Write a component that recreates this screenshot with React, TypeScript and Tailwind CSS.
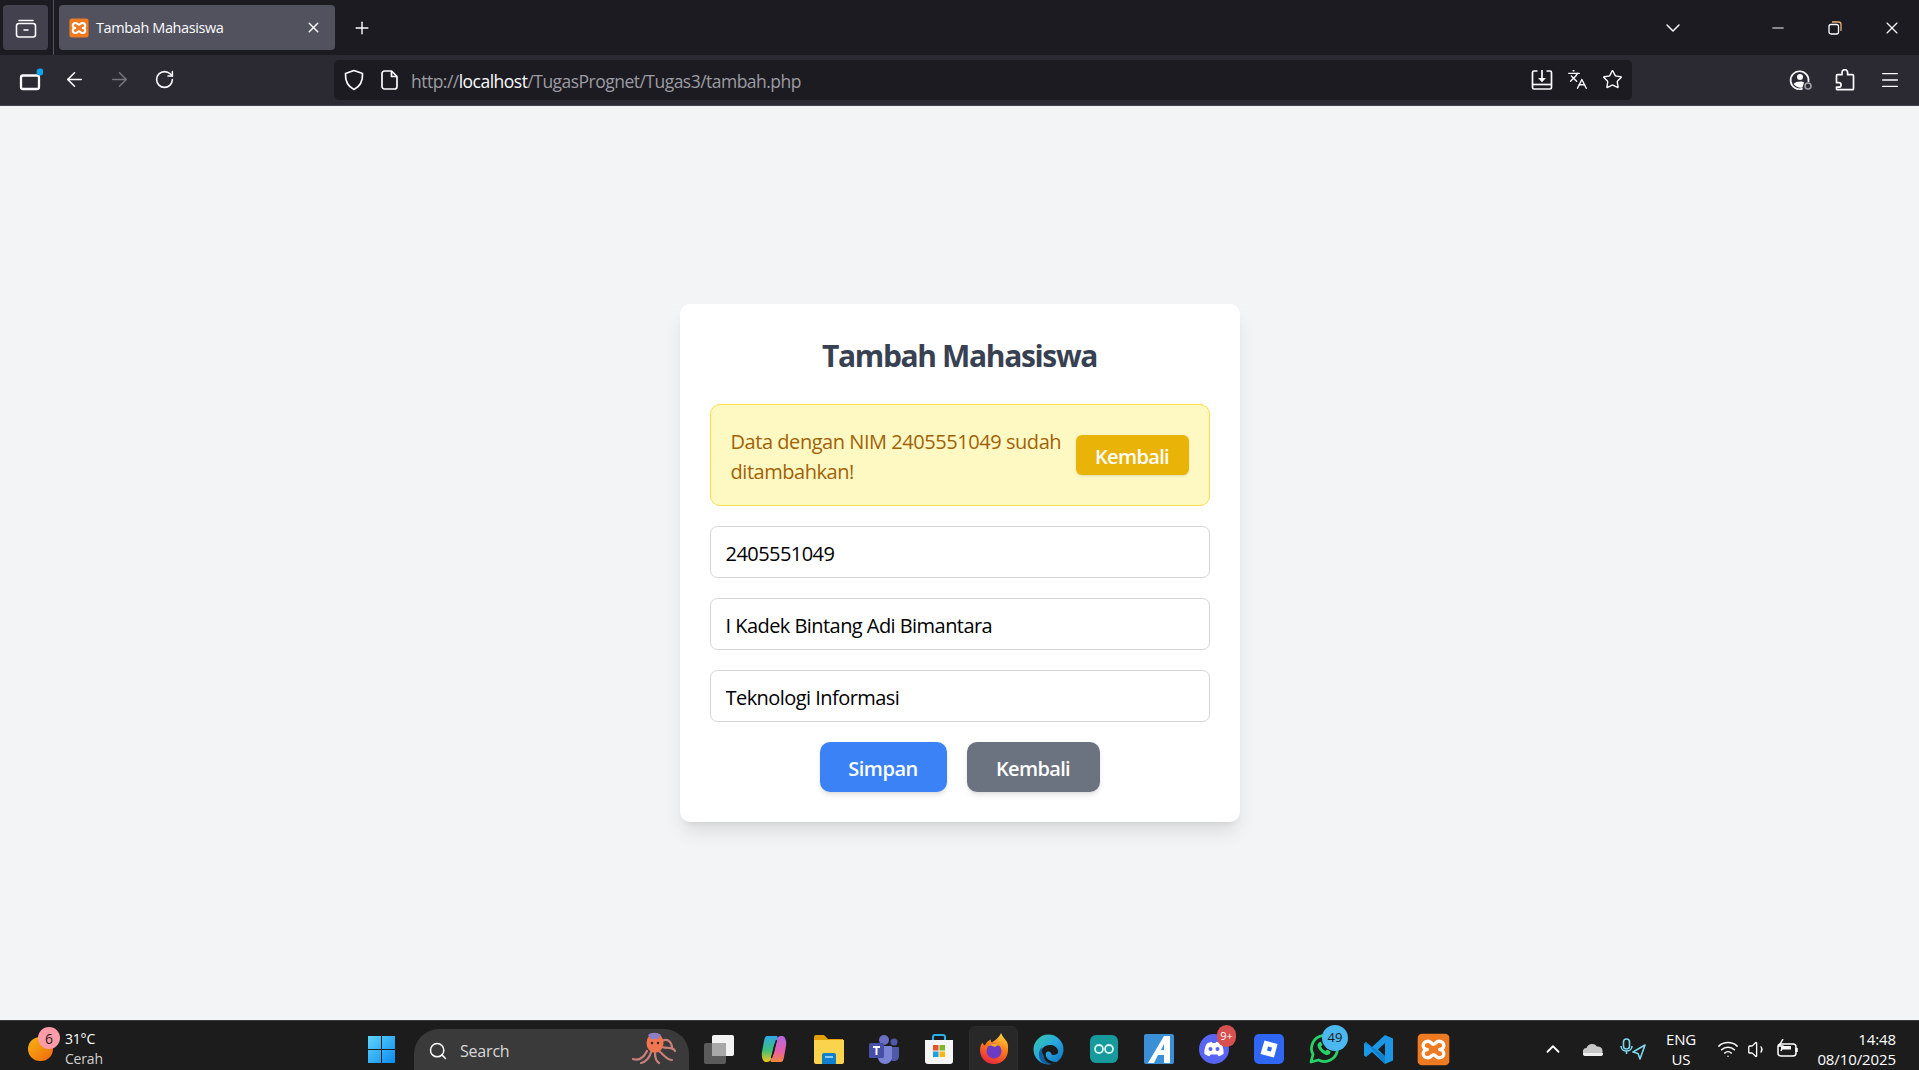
import { ArrowLeft, ArrowRight, ChevronDown, ChevronUp, Languages, Menu, Minus, Plus, RotateCw, Search, Star, Volume1, Wifi, X } from "lucide-react";

function Xampp({ size = 20, rx = 3 }: { size?: number; rx?: number }) {
  return (
    <svg width={size} height={size} viewBox="0 0 24 24">
      <rect x="0.500" y="0.500" width="23" height="23" rx={rx} fill="#ee7a22" />
      <path d="M8 6c2.200 0 2.600 2.200 4 2.200S13.800 6 16 6c2.200 0 3.500 1.500 3.500 3 0 1.700-1.400 3-3 3 1.600 0 3 1.300 3 3 0 1.500-1.300 3-3.500 3-2.200 0-2.600-2.200-4-2.200S10.200 18 8 18c-2.200 0-3.500-1.500-3.500-3 0-1.700 1.400-3 3-3-1.600 0-3-1.300-3-3 0-1.500 1.300-3 3.500-3Z" fill="none" stroke="#fff" strokeWidth="2.400" strokeLinejoin="round" />
    </svg>
  );
}

function TabsIcon() {
  return (
    <svg width="22" height="22" viewBox="0 0 22 22" fill="none" stroke="#fbfbfe" strokeWidth="1.600">
      <path d="M4 3.500h14" strokeLinecap="round" />
      <rect x="1.500" y="6.500" width="19" height="13.500" rx="2.500" />
      <path d="M8.500 13h5" />
    </svg>
  );
}

function SidebarIcon() {
  return (
    <svg width="26" height="26" viewBox="0 0 26 26">
      <rect x="4" y="8.500" width="18" height="13.500" rx="2" fill="none" stroke="#fbfbfe" strokeWidth="2.300" />
      <circle cx="23" cy="5" r="3.500" fill="#0ea5f0" />
    </svg>
  );
}

function ShieldIcon() {
  return (
    <svg width="20" height="22" viewBox="0 0 20 22" fill="none" stroke="#fbfbfe" strokeWidth="1.700">
      <path d="M10 1.500 18.500 4.500c.4 7.500-2.500 13-8.500 16-6-3-8.900-8.500-8.500-16Z" strokeLinejoin="round" />
    </svg>
  );
}

function PageIcon() {
  return (
    <svg width="18" height="20" viewBox="0 0 18 20" fill="none" stroke="#fbfbfe" strokeWidth="1.700">
      <path d="M3.500 1h7l5.500 5.500V16.500a2.500 2.500 0 0 1-2.500 2.500h-10A2.500 2.500 0 0 1 1 16.500v-13A2.500 2.500 0 0 1 3.500 1Z" strokeLinejoin="round" />
      <path d="M10.500 1v5.500H16" strokeLinejoin="round" />
    </svg>
  );
}

function DownloadIcon() {
  return (
    <svg width="22" height="22" viewBox="0 0 22 22" fill="none" stroke="#fbfbfe" strokeWidth="1.700">
      <path d="M6.500 2H3a1.500 1.500 0 0 0-1.500 1.500v15A1.500 1.500 0 0 0 3 20h16a1.500 1.500 0 0 0 1.500-1.500v-15A1.500 1.500 0 0 0 19 2h-3.500" />
      <path d="M2 15.500h18" />
      <path d="M11 1v10" />
      <path d="M7 9h8l-4 4.200Z" fill="#fbfbfe" stroke="none" />
    </svg>
  );
}

function ProfileIcon() {
  return (
    <svg width="24" height="24" viewBox="0 0 24 24" fill="none">
      <path d="M19.500 13.500A9 9 0 1 0 13 20.900" stroke="#fbfbfe" strokeWidth="1.700" strokeLinecap="round" />
      <circle cx="11" cy="9" r="3" fill="#fbfbfe" />
      <path d="M4.500 16c3-3 9-3 10.500-1.500L13.500 19.500c-3 .8-6.500-.5-9-3.500Z" fill="#fbfbfe" />
      <circle cx="19" cy="18" r="3" stroke="#a1a1aa" strokeWidth="1.600" />
    </svg>
  );
}

function PuzzleIcon() {
  return (
    <svg width="22" height="22" viewBox="0 0 22 22" fill="none" stroke="#fbfbfe" strokeWidth="1.700" strokeLinejoin="round">
      <path d="M8 6V3.800a2.800 2.800 0 0 1 5.600 0V6h4.900a1 1 0 0 1 1 1v13a1 1 0 0 1-1 1H3.500a1 1 0 0 1-1-1v-1.500h2.300a2 2 0 0 0 0-4.500H2.500V7a1 1 0 0 1 1-1Z" transform="translate(0 -.3)" />
    </svg>
  );
}

function WinLogo() {
  return (
    <svg width="29" height="29" viewBox="0 0 29 29">
      <defs>
        <linearGradient id="win" x1="0" y1="0" x2="1" y2="1">
          <stop offset="0" stopColor="#5fd4fb" />
          <stop offset="1" stopColor="#0b8bef" />
        </linearGradient>
      </defs>
      <path d="M1 1h13v13H1ZM15 1h13v13H15ZM1 15h13v13H1ZM15 15h13v13H15Z" fill="url(#win)" />
    </svg>
  );
}

function Octopus() {
  return (
    <svg width="50" height="34" viewBox="0 0 50 34" fill="none" strokeLinecap="round">
      <path d="M4 28c6 2 11-2 14-8M12 32c5-1 9-6 10-11M26 22c0 4 1 8 4 10M30 20c5 4 8 9 13 9M33 16c6 2 11-1 13 4M33 10c5-3 9 0 10 6" stroke="#c9807d" strokeWidth="2.200" />
      <ellipse cx="26" cy="12" rx="8.500" ry="10" fill="#f0764f" />
      <path d="M19 4c3-3 9-3 13 0l-3 4h-7Z" fill="#8d7fc5" />
      <circle cx="23" cy="12" r="1.200" fill="#402018" />
      <circle cx="29" cy="12" r="1.200" fill="#402018" />
    </svg>
  );
}

function TaskView() {
  return (
    <svg width="32" height="32" viewBox="0 0 32 32">
      <rect x="1" y="10" width="22" height="21" rx="2" fill="#5b5b5b" />
      <rect x="9" y="2" width="22" height="21" rx="2" fill="#f2f2f2" />
      <rect x="9" y="10" width="14" height="13" fill="#a8a8a8" />
    </svg>
  );
}

function Copilot() {
  return (
    <svg width="30" height="30" viewBox="0 0 30 30">
      <defs>
        <linearGradient id="cpa" x1="0" y1="0" x2="0" y2="1">
          <stop offset="0" stopColor="#2fa8e8" />
          <stop offset=".55" stopColor="#3ec07a" />
          <stop offset="1" stopColor="#f5c518" />
        </linearGradient>
        <linearGradient id="cpb" x1="0" y1="0" x2="0" y2="1">
          <stop offset="0" stopColor="#b36be0" />
          <stop offset=".6" stopColor="#e85fa8" />
          <stop offset="1" stopColor="#f28a3c" />
        </linearGradient>
      </defs>
      <path d="M8 2h9c1.500 0 2 1 1.500 2.500L15 11 12 25c-.5 2-2 3-4 3H7c-3 0-5-5-4-10L5 7c.5-3 1.500-5 3-5Z" fill="url(#cpa)" />
      <path d="M22 28h-9c-1.500 0-2-1-1.500-2.500L15 19l3-14c.5-2 2-3 4-3h1c3 0 5 5 4 10l-2 11c-.5 3-1.500 5-3 5Z" fill="url(#cpb)" />
      <path d="M12.500 24 17.500 6" stroke="#1c1c1c" strokeWidth="1.400" />
    </svg>
  );
}

function Explorer() {
  return (
    <svg width="32" height="30" viewBox="0 0 32 30">
      <path d="M1 3a2 2 0 0 1 2-2h8l4 4h15v4H1Z" fill="#e3a008" />
      <path d="M1 6h30v22a2 2 0 0 1-2 2H3a2 2 0 0 1-2-2Z" fill="#fbd34d" />
      <path d="M9 21a2 2 0 0 1 2-2h10a2 2 0 0 1 2 2v9H9Z" fill="#0f7fcf" />
      <path d="M12 23h8" stroke="#bfe3fa" strokeWidth="1.500" />
    </svg>
  );
}

function Teams() {
  return (
    <svg width="32" height="30" viewBox="0 0 32 30">
      <circle cx="16" cy="6" r="5" fill="#6a6fc4" />
      <circle cx="26" cy="8" r="3.500" fill="#5059a8" />
      <path d="M21 13h9a1 1 0 0 1 1 1v8c0 3-2 5-5 5s-5-2-5-5Z" fill="#5059a8" />
      <path d="M10 12h13a1 1 0 0 1 1 1v10c0 4-3 7-7 7s-7-3-7-7Z" fill="#7b83d6" />
      <rect x="1" y="9" width="15" height="15" rx="1.500" fill="#4750a8" />
      <path d="M5 13h7M8.500 13v8" stroke="#fff" strokeWidth="2" />
    </svg>
  );
}

function Store() {
  return (
    <svg width="30" height="32" viewBox="0 0 30 32">
      <path d="M9 7V4a2 2 0 0 1 2-2h8a2 2 0 0 1 2 2v3" fill="none" stroke="#28b0e8" strokeWidth="2" />
      <path d="M1 7h28v21a3 3 0 0 1-3 3H4a3 3 0 0 1-3-3Z" fill="#f5f5f5" />
      <rect x="9" y="12" width="5.500" height="5.500" fill="#e8512d" />
      <rect x="15.500" y="12" width="5.500" height="5.500" fill="#7db52d" />
      <rect x="9" y="18.500" width="5.500" height="5.500" fill="#1fa0e8" />
      <rect x="15.500" y="18.500" width="5.500" height="5.500" fill="#fbb814" />
    </svg>
  );
}

function Firefox() {
  return (
    <svg width="30" height="32" viewBox="0 0 30 32">
      <defs>
        <linearGradient id="ffa" x1=".7" y1="0" x2=".3" y2="1">
          <stop offset="0" stopColor="#ffd43b" />
          <stop offset=".45" stopColor="#ff7a1a" />
          <stop offset="1" stopColor="#e8263f" />
        </linearGradient>
      </defs>
      <path d="M15 31C7 31 1 25 1 17c0-3 1-6 2.500-7.500C4 11 5 12 6 12.500 7 9 10 7 12 6.500 11.500 8 12 9 13 9.500 16 7 20 5 22 0c1 3 4 6 6 9 1.500 3 1 6 1 8 0 8-6 14-14 14Z" fill="url(#ffa)" />
      <circle cx="15" cy="18" r="7.500" fill="#6b3bc4" />
      <path d="M9 13c3-3 9-3 12 0-3-1-4 0-5 1-2-1-5-2-7-1Z" fill="#ffb020" />
    </svg>
  );
}

function Edge() {
  return (
    <svg width="31" height="31" viewBox="0 0 31 31">
      <defs>
        <linearGradient id="eda" x1="0" y1="0" x2="1" y2="1">
          <stop offset="0" stopColor="#36c8a8" />
          <stop offset=".5" stopColor="#28a8e0" />
          <stop offset="1" stopColor="#0f6cbd" />
        </linearGradient>
      </defs>
      <circle cx="15.500" cy="15.500" r="15" fill="url(#eda)" />
      <path d="M8 19c0-5 4-8 9-8 4 0 7 2 8 5.500 1 3-2 4.500-5 4.500-2 0-1-2-3-3-3-1.500-5 1-4 4 1 3.500 5 6 11 6-4 3-11 3-14-1-1.500-2-2-5-2-8Z" fill="#1a1a1a" />
      <path d="M11 22c0 4 3 7 8 8-6 1-12-1-13-8-.5-4 1-7 3-9-1 3 0 6 2 9Z" fill="#0f5f9f" />
    </svg>
  );
}

function Arduino() {
  return (
    <svg width="30" height="30" viewBox="0 0 30 30" fill="none">
      <rect x="1" y="1" width="28" height="28" rx="6" fill="#179a9c" />
      <circle cx="10" cy="15" r="4" stroke="#d8f3f3" strokeWidth="1.800" />
      <circle cx="20" cy="15" r="4" stroke="#d8f3f3" strokeWidth="1.800" />
    </svg>
  );
}

function ArchIcon() {
  return (
    <svg width="30" height="30" viewBox="0 0 30 30">
      <rect x="0" y="0" width="30" height="30" rx="2" fill="#3a8fd6" />
      <path d="M20 2h6v27h-6v-8h-6l-4 8H4ZM20 16V10l-3 6Z" fill="#fff" fillRule="evenodd" />
    </svg>
  );
}

function Discord() {
  return (
    <svg width="30" height="30" viewBox="0 0 30 30">
      <circle cx="15" cy="15" r="15" fill="#5865f2" />
      <path d="M8 9.500c2-1 3.500-1.500 5-1.500l.4 1h3.200l.4-1c1.500 0 3 .5 5 1.500 2 3 3 6.500 2.500 10.500-1.800 1.300-3.500 2-5 2.300l-1-1.800H11.500l-1 1.800c-1.500-.3-3.200-1-5-2.300C5 16 6 12.500 8 9.500Z" fill="#fff" />
      <circle cx="11.500" cy="15" r="2" fill="#5865f2" />
      <circle cx="18.500" cy="15" r="2" fill="#5865f2" />
    </svg>
  );
}

function Roblox() {
  return (
    <svg width="30" height="30" viewBox="0 0 30 30">
      <rect x="0" y="0" width="30" height="30" rx="5" fill="#2f66f3" />
      <path d="M10.500 6.500 23.500 10 20 23.500 6.500 20Z" fill="#fff" />
      <path d="M14 12.500l4 1-1 4-4-1Z" fill="#2f66f3" />
    </svg>
  );
}

function Whatsapp() {
  return (
    <svg width="32" height="32" viewBox="0 0 32 32" fill="none">
      <path d="M3 29l2-7.500A13 13 0 1 1 10.500 27Z" stroke="#25d366" strokeWidth="2.800" strokeLinejoin="round" />
      <path d="M11 9.500c-1.500 1-2 3-1 5 1.500 3 4 5.500 7 7 2 1 4 .5 5-1 .5-1 .5-2 0-2.500l-3-1.500-1.500 1.500c-2-1-3.500-2.500-4.500-4.500L14.500 12 13 9c-.5-.5-1.300-.2-2 .5Z" fill="#25d366" />
    </svg>
  );
}

function VSCode() {
  return (
    <svg width="31" height="31" viewBox="0 0 31 31">
      <path d="M22 1 30 4.500v22L22 30 9 18 3 23 1 21.500v-12L3 8l6 5Zm0 8-7 6.500 7 6.500Z" fill="#1b97e6" fillRule="evenodd" />
      <path d="M1 9.500 3 8l19 22L22 22 9 13Z" fill="#0e72b8" opacity=".6" />
    </svg>
  );
}

function Badge({ children, cls }: { children: string; cls: string }) {
  return <span className={`absolute flex items-center justify-center rounded-full ${cls}`}>{children}</span>;
}

function TaskIcon({ children, active, badge }: { children: React.ReactNode; active?: boolean; badge?: React.ReactNode }) {
  return (
    <div className="relative flex h-[50px] w-[55px] shrink-0 items-center justify-center">
      {active && <div className="absolute inset-x-[3px] top-[2px] -bottom-2 rounded-t-md border border-[#2c2c2c] bg-[#282828]" />}
      <div className="relative flex items-center justify-center">{children}</div>
      {badge}
    </div>
  );
}

function Field({ value }: { value: string }) {
  return (
    <input
      readOnly
      defaultValue={value}
      className="h-[52px] w-full rounded-[7.5px] border border-[#d1d5db] bg-white px-[15px] pt-[3px] text-[20px] tracking-[-0.55px] text-black outline-none"
    />
  );
}

export default function App() {
  return (
    <div className="flex h-screen flex-col overflow-hidden bg-[#f3f4f6] font-['Open_Sans','Noto_Sans',sans-serif]">
      {/* tab strip */}
      <div className="flex h-[55px] shrink-0 items-center bg-[#1c1b22] pl-[3px] text-[#fbfbfe]">
        <div className="flex h-[45px] w-[45px] items-center justify-center rounded bg-[#42414d]">
          <TabsIcon />
        </div>
        <div className="ml-[5px] h-[55px] w-px bg-[#52525e]" />
        <div className="ml-[5px] flex h-[45px] w-[276px] items-center rounded bg-[#52525e] pl-[10px] pr-[13px]">
          <Xampp />
          <span className="ml-[7px] pt-[2px] text-[14.5px] leading-none tracking-[-0.4px]">Tambah Mahasiswa</span>
          <X size={17} className="ml-auto" strokeWidth={2} />
        </div>
        <Plus size={20} className="ml-[17px]" strokeWidth={1.7} />
        <ChevronDown size={24} className="ml-auto" strokeWidth={1.5} />
        <div className="ml-[84px] flex items-center pr-[17px]">
          <Minus size={18} strokeWidth={1.3} />
          <svg width="16" height="16" viewBox="0 0 16 16" fill="none" stroke="#fbfbfe" strokeWidth="1.300" className="ml-[40px]">
            <rect x="2" y="4.500" width="9.500" height="9.500" rx="2" />
            <path d="M5 2h6.500A2.500 2.500 0 0 1 14 4.500V11" stroke="#e8b07a" />
          </svg>
          <X size={20} strokeWidth={1.4} className="ml-[39px]" />
        </div>
      </div>

      {/* toolbar */}
      <div className="flex h-[51px] shrink-0 items-center border-b border-[#45454f] bg-[#2b2a33] pb-px text-[#fbfbfe]">
        <div className="ml-[17px] flex w-[26px] justify-center"><SidebarIcon /></div>
        <ArrowLeft size={23} strokeWidth={1.7} className="ml-[20px]" />
        <ArrowRight size={23} strokeWidth={1.7} className="ml-[22px] text-[#75747c]" />
        <RotateCw size={21} strokeWidth={1.8} className="ml-[23px]" />
        <div className="ml-[159px] flex h-10 w-[1298px] items-center rounded-[5px] bg-[#1c1b22] pl-[10px] pr-[9px]">
          <ShieldIcon />
          <div className="ml-[17px]"><PageIcon /></div>
          <div className="ml-[12px] pt-[4px] text-[17.5px] leading-none tracking-[-0.52px] text-[#9c9ba1]">
            http://<span className="text-[#fbfbfe]">localhost</span>/TugasPrognet/Tugas3/tambah.php
          </div>
          <div className="ml-auto flex items-center gap-[14px]">
            <DownloadIcon />
            <Languages size={21} strokeWidth={1.6} />
            <Star size={21} strokeWidth={1.6} />
          </div>
        </div>
        <div className="ml-[157px]"><ProfileIcon /></div>
        <div className="ml-[21px]"><PuzzleIcon /></div>
        <Menu size={22} strokeWidth={1.5} className="ml-[23px]" />
      </div>

      {/* page */}
      <main className="flex min-h-0 flex-1 items-center justify-center">
        <div className="flex w-[560px] flex-col rounded-[10px] bg-white p-[30px] shadow-[0_12.5px_18.75px_-3.75px_rgb(0_0_0/0.1),0_5px_7.5px_-5px_rgb(0_0_0/0.1)]">
          <h1 className="text-center text-[30px] font-bold leading-[43px] tracking-[-1.35px] text-[#374151]">Tambah Mahasiswa</h1>
          <div className="mt-[27px] flex items-center rounded-[10px] border border-[#fde047] bg-[#fef9c3] p-5">
            <p className="w-[342px] translate-y-[2px] text-[20px] leading-[30px] tracking-[-0.45px] text-[#a16207]">Data dengan NIM 2405551049 sudah ditambahkan!</p>
            <button className="ml-auto flex h-10 w-[113px] items-center justify-center rounded-[6px] bg-[#eab308] pt-[3px] text-[20px] font-semibold tracking-[-0.65px] text-white shadow-sm">Kembali</button>
          </div>
          <div className="mt-5 flex flex-col gap-5">
            <Field value="2405551049" />
            <Field value="I Kadek Bintang Adi Bimantara" />
            <Field value="Teknologi Informasi" />
          </div>
          <div className="mt-5 flex justify-center gap-5">
            <button className="h-[50px] w-[127px] rounded-[10px] bg-[#3b82f6] pt-[4px] text-[20px] font-semibold tracking-[-0.5px] text-white shadow-md">Simpan</button>
            <button className="h-[50px] w-[133px] rounded-[10px] bg-[#6b7280] pt-[4px] text-[20px] font-semibold tracking-[-0.65px] text-white shadow-md">Kembali</button>
          </div>
        </div>
      </main>

      {/* taskbar */}
      <div className="flex h-[50px] shrink-0 items-center overflow-hidden border-t border-[#3a3a3a] bg-[#1c1c1c] pt-[7px] text-white">
        <div className="flex w-[354px] shrink-0 items-center pl-[28px]">
          <div className="relative h-[24px] w-[25px] rounded-full bg-gradient-to-br from-[#f5b50f] to-[#f0640f]">
            <Badge cls="-right-[7px] -top-[10px] h-[22px] w-[22px] bg-[#ff9ca8] text-[14px] text-[#1c1c1c]">6</Badge>
          </div>
          <div className="ml-[12px] flex flex-col text-[14px] leading-[20px] tracking-[-0.2px]">
            <span>31°C</span>
            <span className="text-[#d0d0d0]">Cerah</span>
          </div>
        </div>
        <div className="flex h-[50px] w-[55px] shrink-0 items-center justify-center"><WinLogo /></div>
        <div className="ml-[5px] flex h-[50px] w-[275px] shrink-0 translate-y-[5px] items-start rounded-t-[25px] bg-[#3a3a3a] pl-[14px] pr-[10px] pt-[11px]">
          <Search size={20} strokeWidth={1.8} className="mt-[1px]" />
          <span className="ml-[12px] text-[16px] leading-[22px] tracking-[-0.2px] text-[#d8d8d8]">Search</span>
          <div className="ml-auto -mt-[9px]"><Octopus /></div>
        </div>
        <div className="ml-[2px] flex shrink-0">
          <TaskIcon><TaskView /></TaskIcon>
          <TaskIcon><Copilot /></TaskIcon>
          <TaskIcon><Explorer /></TaskIcon>
          <TaskIcon><Teams /></TaskIcon>
          <TaskIcon><Store /></TaskIcon>
          <TaskIcon active><Firefox /></TaskIcon>
          <TaskIcon><Edge /></TaskIcon>
          <TaskIcon><Arduino /></TaskIcon>
          <TaskIcon><ArchIcon /></TaskIcon>
          <TaskIcon badge={<Badge cls="right-[5px] top-[1px] h-[22px] w-[19px] bg-[#d95050] text-[11px] text-white">9+</Badge>}><Discord /></TaskIcon>
          <TaskIcon><Roblox /></TaskIcon>
          <TaskIcon badge={<Badge cls="right-[3px] top-[1px] h-[26px] w-[26px] bg-[#4cb8f0] text-[13px] text-[#1c1c1c]">49</Badge>}><Whatsapp /></TaskIcon>
          <TaskIcon><VSCode /></TaskIcon>
          <TaskIcon><Xampp size={33} rx={3} /></TaskIcon>
        </div>
        <div className="ml-auto flex shrink-0 items-center">
          <div className="flex w-10 justify-center"><ChevronUp size={22} strokeWidth={2} /></div>
          <div className="flex w-10 justify-center">
            <svg width="20" height="13" viewBox="0 0 20 13"><path d="M4 13a4 4 0 0 1-.5-8A6 6 0 0 1 14 3.500 4.800 4.800 0 0 1 15.500 13Z" fill="#c8c8c8" /><path d="M0 10h20v1a2 2 0 0 1-2 2H2a2 2 0 0 1-2-2Z" fill="#f0f0f0" /></svg>
          </div>
          <div className="flex w-10 justify-center">
            <svg width="26" height="22" viewBox="0 0 26 22" fill="none" stroke="#7fd6ea" strokeWidth="1.600">
              <rect x="3.500" y="1" width="6" height="10" rx="3" />
              <path d="M1 8c0 3 2.500 5 5.500 5s5.500-2 5.500-5M6.500 13v3" />
              <path d="M25 7 13 14l5 1.500 2 5.500Z" strokeLinejoin="round" />
            </svg>
          </div>
          <div className="flex w-14 flex-col items-center text-[15px] leading-[20px] tracking-[-0.2px]">
            <span>ENG</span>
            <span>US</span>
          </div>
          <div className="ml-1 flex w-[30px] justify-center"><Wifi size={22} strokeWidth={1.7} /></div>
          <div className="flex w-[28px] justify-center"><Volume1 size={21} strokeWidth={1.5} /></div>
          <div className="flex w-[34px] justify-center">
            <svg width="22" height="20" viewBox="0 0 22 20" fill="none" stroke="#fff" strokeWidth="1.500">
              <rect x="1" y="5" width="18" height="12" rx="3" />
              <path d="M19.500 9v4" strokeWidth="2.500" />
              <path d="M4 7h10v3.500H4Z" fill="#fff" stroke="none" />
              <path d="M6 0 2 7h4l-2 5" strokeLinejoin="round" />
            </svg>
          </div>
          <div className="flex w-[114px] flex-col items-end pr-[23px] text-[15px] leading-[20px] tracking-[-0.1px]">
            <span>14:48</span>
            <span>08/10/2025</span>
          </div>
        </div>
      </div>
    </div>
  );
}
